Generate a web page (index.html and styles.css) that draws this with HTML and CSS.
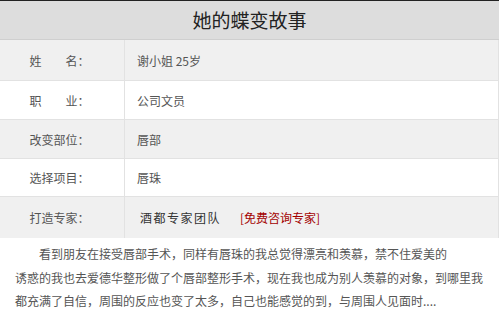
FILE: index.html
```html
<!DOCTYPE html>
<html lang="zh-CN">
<head>
<meta charset="utf-8">
<title>她的蝶变故事</title>
<link rel="stylesheet" href="styles.css">
</head>
<body>
<div class="story">
  <h1 class="title">她的蝶变故事</h1>
  <div class="rows">
    <div class="row grey r1"><div class="label">姓　　名：</div><div class="value">谢小姐 25岁</div></div>
    <div class="row white r2"><div class="label">职　　业：</div><div class="value">公司文员</div></div>
    <div class="row grey r3"><div class="label">改变部位：</div><div class="value">唇部</div></div>
    <div class="row white r4"><div class="label">选择项目：</div><div class="value">唇珠</div></div>
    <div class="row grey r5"><div class="label">打造专家：</div><div class="value"><span class="team">酒都专家团队</span><a class="consult" href="#">[免费咨询专家]</a></div></div>
  </div>
  <p class="text">看到朋友在接受唇部手术，同样有唇珠的我总觉得漂亮和羡慕，禁不住爱美的<br>诱惑的我也去爱德华整形做了个唇部整形手术，现在我也成为别人羡慕的对象，到哪里我<br>都充满了自信，周围的反应也变了太多，自己也能感觉的到，与周围人见面时....</p>
</div>
</body>
</html>
```

FILE: styles.css
```css
* { box-sizing: border-box; }
html, body { margin: 0; padding: 0; background: #fff; }
body {
  font-family: "Noto Sans CJK SC", "Microsoft YaHei", sans-serif;
  color: #555;
  width: 499px;
  height: 320px;
  overflow: hidden;
}
.story { width: 499px; }
.title {
  margin: 0;
  height: 40px;
  border-top: 1px solid #222;
  border-bottom: 1px solid #cfcfcf;
  background: #dddddd;
  font-size: 19px;
  font-weight: 400;
  color: #222;
  text-align: center;
  line-height: 37px;
}
.rows { display: flex; flex-direction: column; }
.row {
  display: flex;
  border-bottom: 1px solid #e2e2e2;
  border-right: 1px solid #e2e2e2;
  font-size: 12px;
}
.row.grey { background: #f0f0f0; }
.row.white { background: #fff; }
.r1 { height: 41px; }
.r2 { height: 39px; }
.r3 { height: 39px; }
.r4 { height: 38px; }
.r5 { height: 41px; border-bottom: none; }
.label {
  width: 125px;
  flex: none;
  border-right: 1px solid #e2e2e2;
  display: flex;
  align-items: center;
  justify-content: center;
  padding-right: 5px;
}
.value {
  display: flex;
  align-items: center;
  padding-left: 12px;
}
.team {
  padding-left: 3px;
  letter-spacing: 1.5px;
  color: #333;
  font-weight: 400;
}
.consult {
  margin-left: 19px;
  color: #a30000;
  text-decoration: none;
}
.text {
  margin: 0;
  padding: 4px 0 0 15px;
  font-size: 12px;
  line-height: 23.5px;
  color: #555;
  text-indent: 2em;
  white-space: nowrap;
}
```
